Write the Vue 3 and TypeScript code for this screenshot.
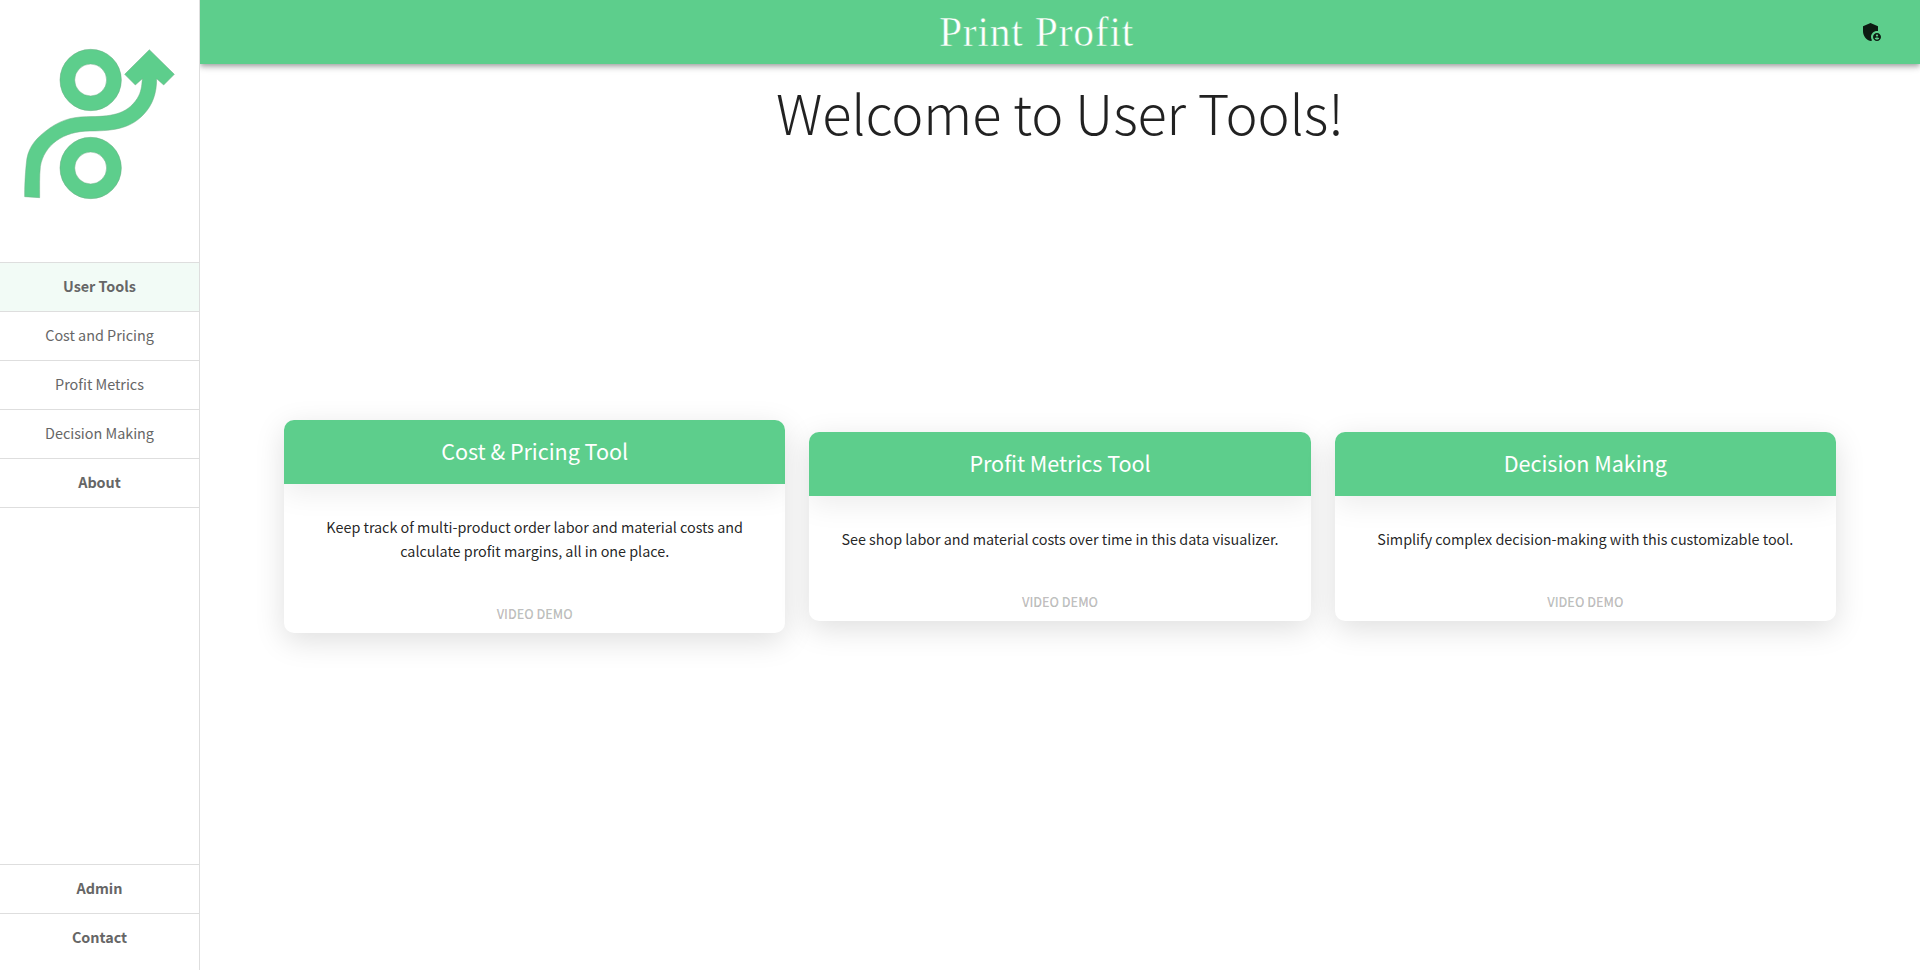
<script setup lang="ts">
interface NavItem {
  label: string
  strong?: boolean
  active?: boolean
}

interface Tool {
  title: string
  text: string
}

const mainNav: NavItem[] = [
  { label: 'User Tools', strong: true, active: true },
  { label: 'Cost and Pricing' },
  { label: 'Profit Metrics' },
  { label: 'Decision Making' },
  { label: 'About', strong: true },
]

const footerNav: NavItem[] = [
  { label: 'Admin', strong: true },
  { label: 'Contact', strong: true },
]

const tools: Tool[] = [
  {
    title: 'Cost & Pricing Tool',
    text: 'Keep track of multi-product order labor and material costs and calculate profit margins, all in one place.',
  },
  {
    title: 'Profit Metrics Tool',
    text: 'See shop labor and material costs over time in this data visualizer.',
  },
  {
    title: 'Decision Making',
    text: 'Simplify complex decision-making with this customizable tool.',
  },
]
</script>

<template>
  <div class="layout">
    <aside class="sidebar">
      <svg class="logo" viewBox="0 0 600 786" aria-hidden="true">
        <g class="rings">
          <circle cx="272" cy="240" r="70" />
          <circle cx="272" cy="504" r="70" />
        </g>
        <g class="ring-edges">
          <circle cx="272" cy="240" r="92" />
          <circle cx="272" cy="240" r="48" />
          <circle cx="272" cy="504" r="92" />
          <circle cx="272" cy="504" r="48" />
        </g>
        <path
          class="arrow"
          transform="translate(0 60)"
          d="M74 530L119 533C119 500 118 470 121 440C132 375 190 333 270 333C350 333 395 322 432 282C458 254 470 220 470 176L491 195L523 163L448 89L374 163L406 195L427 176C425 200 424 215 412 235C380 285 330 290 260 290C210 291 175 303 135 335C100 362 82 390 79 430C75 470 74 500 74 530Z"
        />
      </svg>
      <nav class="nav">
        <a
          v-for="item in mainNav"
          :key="item.label"
          class="nav-item"
          :class="{ strong: item.strong, active: item.active }"
          >{{ item.label }}</a
        >
      </nav>
      <nav class="nav nav-bottom">
        <a
          v-for="item in footerNav"
          :key="item.label"
          class="nav-item"
          :class="{ strong: item.strong }"
          >{{ item.label }}</a
        >
      </nav>
    </aside>

    <div class="content">
      <header class="topbar">
        <span class="brand">Print Profit</span>
        <button class="admin" aria-label="Admin">
          <svg viewBox="0 0 24 24">
            <path
              d="M17 11c.34 0 .67.04 1 .09V6.27L10.5 3 3 6.27v4.91c0 4.54 3.2 8.79 7.5 9.82.55-.13 1.08-.32 1.6-.55-.69-.98-1.1-2.17-1.1-3.45 0-3.31 2.69-6 6-6z"
            />
            <path
              d="M17 13c-2.21 0-4 1.79-4 4s1.79 4 4 4 4-1.79 4-4-1.79-4-4-4zm0 1.38c.62 0 1.12.51 1.12 1.12s-.51 1.12-1.12 1.12-1.12-.51-1.12-1.12.5-1.12 1.12-1.12zm0 5.37c-.93 0-1.74-.46-2.24-1.17.05-.72 1.51-1.08 2.24-1.08s2.19.36 2.24 1.08c-.5.71-1.31 1.17-2.24 1.17z"
            />
          </svg>
        </button>
      </header>
      <main class="main">
        <h1 class="welcome">Welcome to User Tools!</h1>
        <section class="cards">
          <article v-for="tool in tools" :key="tool.title" class="card">
            <h2 class="card-title">{{ tool.title }}</h2>
            <p class="card-text">{{ tool.text }}</p>
            <button class="demo" disabled>VIDEO DEMO</button>
          </article>
        </section>
      </main>
    </div>
  </div>
</template>

<style>
body {
  margin: 0;
  background: #fff;
}
</style>

<style scoped>
.layout {
  display: flex;
  height: 100vh;
  overflow: hidden;
  font-family: 'Noto Sans CJK SC', 'Noto Sans', sans-serif;
  color: rgba(0, 0, 0, 0.87);
}
.sidebar {
  position: relative;
  z-index: 2;
  box-sizing: border-box;
  width: 200px;
  flex: none;
  display: flex;
  flex-direction: column;
  background: #fff;
  border-right: 1px solid #dedede;
}
.logo {
  display: block;
  width: 200px;
  height: 262px;
  flex: none;
}
.rings circle {
  fill: none;
  stroke: #5dce8c;
  stroke-width: 44.5;
}
.ring-edges circle {
  fill: none;
  stroke: #6fae87;
  stroke-width: 1.5;
}
.arrow {
  fill: #5dce8c;
  stroke: #6fae87;
  stroke-width: 1.5;
}
.nav {
  display: flex;
  flex-direction: column;
  border-top: 1px solid #dedede;
}
.nav-item {
  height: 48px;
  line-height: 46px;
  border-bottom: 1px solid #dedede;
  text-align: center;
  font-size: 14.4px;
  letter-spacing: -0.02px;
  color: #666;
}
.nav-item.strong {
  font-weight: 700;
}
.nav-item.active {
  background: #f2fbf6;
}
.nav-bottom {
  margin-top: auto;
  padding-bottom: 8px;
}
.nav-bottom .nav-item:last-child {
  border-bottom: 0;
}
.content {
  flex: 1;
  min-width: 0;
  display: flex;
  flex-direction: column;
}
.topbar {
  position: relative;
  z-index: 1;
  flex: none;
  display: grid;
  grid-template-columns: 1fr auto 1fr;
  align-items: center;
  height: 64px;
  padding: 0 36px;
  background: #5dce8c;
  box-shadow:
    0 2px 4px -1px rgba(0, 0, 0, 0.2),
    0 4px 5px rgba(0, 0, 0, 0.14),
    0 1px 10px rgba(0, 0, 0, 0.12);
}
.brand {
  grid-column: 2;
  font-family: 'Liberation Serif', serif;
  font-size: 41.5px;
  line-height: 64px;
  letter-spacing: 0.8px;
  margin-left: -47px;
  color: #fff;
  -webkit-text-stroke: 0.5px #5dce8c;
}
.admin {
  justify-self: end;
  padding: 0;
  border: 0;
  background: none;
}
.admin svg {
  display: block;
  width: 24px;
  height: 24px;
  fill: rgba(0, 0, 0, 0.87);
}
.main {
  flex: 1;
  display: flex;
  flex-direction: column;
}
.welcome {
  margin: 12px 0 0;
  height: 72px;
  line-height: 72px;
  text-align: center;
  font-size: 54.2px;
  font-weight: 300;
  letter-spacing: -0.15px;
}
.cards {
  display: grid;
  grid-template-columns: repeat(3, 1fr);
  gap: 24px;
  align-items: center;
  height: 213px;
  margin-top: 272px;
  padding: 0 84px;
}
.card {
  display: flex;
  flex-direction: column;
  border-radius: 10px;
  background: #fff;
  overflow: hidden;
  text-align: center;
  box-shadow: 0 8px 30px rgba(0, 0, 0, 0.13);
}
.card-title {
  margin: 0;
  height: 64px;
  line-height: 62px;
  background: #5dce8c;
  color: #fff;
  font-size: 21.6px;
  font-weight: 400;
  letter-spacing: -0.05px;
  box-shadow: 0 8px 30px rgba(0, 0, 0, 0.08);
}
.card-text {
  margin: 0;
  padding: 31px 24px 33px;
  font-size: 14.4px;
  line-height: 24px;
  letter-spacing: -0.025px;
}
.demo {
  box-sizing: border-box;
  height: 37px;
  padding: 0 0 2px;
  border: 0;
  background: none;
  font: 500 12.6px/35px 'Noto Sans CJK SC', 'Noto Sans', sans-serif;
  letter-spacing: -0.03px;
  color: rgba(0, 0, 0, 0.26);
  -webkit-text-stroke: 0.2px rgba(0, 0, 0, 0.26);
}
</style>
